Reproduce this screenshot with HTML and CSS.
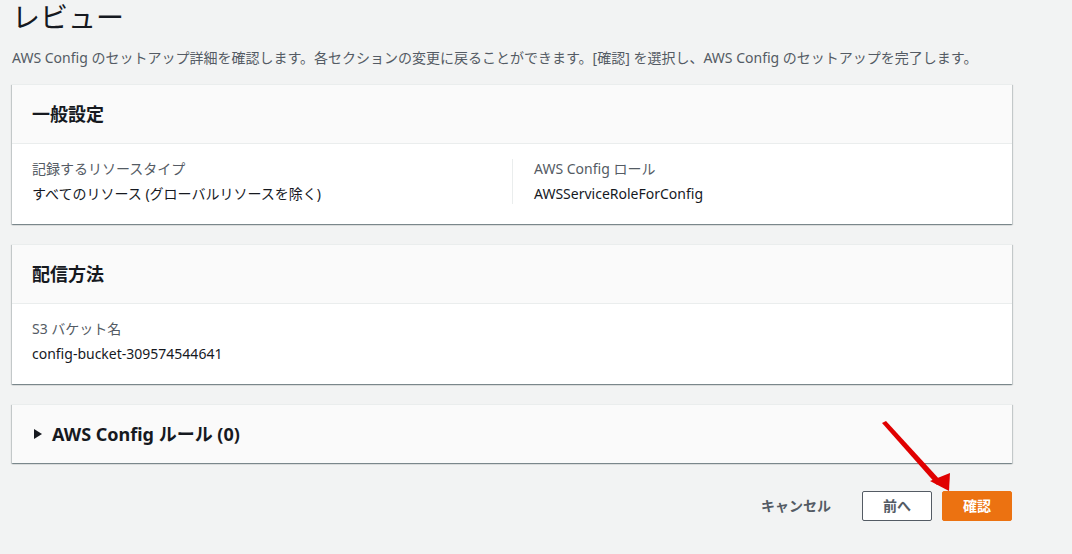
FILE: index.html
```html
<!DOCTYPE html>
<html lang="ja">
<head>
<meta charset="utf-8">
<title>レビュー</title>
<link rel="stylesheet" href="styles.css">
</head>
<body>
<div class="page">
  <h1 class="title">レビュー</h1>
  <p class="desc">AWS Config のセットアップ詳細を確認します。各セクションの変更に戻ることができます。[確認] を選択し、AWS Config のセットアップを完了します。</p>

  <section class="card">
    <div class="card-head"><h2>一般設定</h2></div>
    <div class="card-body cols">
      <div class="col">
        <div class="label">記録するリソースタイプ</div>
        <div class="value">すべてのリソース (グローバルリソースを除く)</div>
      </div>
      <div class="col col-2">
        <div class="label">AWS Config ロール</div>
        <div class="value">AWSServiceRoleForConfig</div>
      </div>
    </div>
  </section>

  <section class="card">
    <div class="card-head"><h2>配信方法</h2></div>
    <div class="card-body">
      <div class="col">
        <div class="label">S3 バケット名</div>
        <div class="value">config-bucket-309574544641</div>
      </div>
    </div>
  </section>

  <section class="card">
    <div class="card-head collapsed"><span class="caret"></span><h2>AWS Config ルール (0)</h2></div>
  </section>

  <div class="actions">
    <button class="btn btn-link">キャンセル</button>
    <button class="btn btn-normal">前へ</button>
    <button class="btn btn-primary">確認</button>
  </div>
</div>
<svg class="annot" width="1072" height="554" viewBox="0 0 1072 554">
  <path d="M882 423 L886 421 L941 481 L937 485 Z" fill="#e00000"/>
  <path d="M949 491 L930 481 L950 473 Z" fill="#e00000"/>
</svg>
</body>
</html>
```

FILE: styles.css
```css
html, body {
  margin: 0;
  padding: 0;
  background: #f2f3f3;
}
body {
  font-family: "Noto Sans", "Noto Sans CJK JP", sans-serif;
  color: #16191f;
  width: 1072px;
  height: 554px;
  overflow: hidden;
  position: relative;
}
.page {
  padding: 0 60px 0 12px;
  display: flex;
  flex-direction: column;
}
.title {
  margin: 0;
  font-size: 28px;
  font-weight: 400;
  line-height: 35px;
  color: #16191f;
}
.desc {
  margin: 13px 0 16px;
  font-size: 14px;
  line-height: 20px;
  color: #545b64;
  white-space: nowrap;
}
.card {
  background: #fff;
  border-top: 1px solid #eaeded;
  box-shadow: 0 1px 1px 0 rgba(0, 28, 36, 0.3), 1px 1px 1px 0 rgba(0, 28, 36, 0.15), -1px 1px 1px 0 rgba(0, 28, 36, 0.15);
  margin-bottom: 20px;
  width: 1000px;
}
.card-head {
  background: #fafafa;
  padding: 18px 20px;
  border-bottom: 1px solid #eaeded;
  display: flex;
  align-items: center;
}
.card-head.collapsed {
  border-bottom: none;
}
.card-head h2 {
  margin: 0;
  font-size: 18px;
  font-weight: 700;
  line-height: 22px;
}
.caret {
  width: 0;
  height: 0;
  border-top: 5px solid transparent;
  border-bottom: 5px solid transparent;
  border-left: 8px solid #16191f;
  margin: 0 10px 0 2px;
}
.card-body {
  padding: 15px 20px 20px;
}
.cols {
  display: grid;
  grid-template-columns: 1fr 1fr;
}
.col-2 {
  border-left: 1px solid #eaeded;
  padding-left: 21px;
}
.label {
  font-size: 14px;
  line-height: 20px;
  color: #545b64;
  margin-bottom: 5px;
}
.value {
  font-size: 14px;
  line-height: 20px;
  color: #16191f;
}
.actions {
  display: flex;
  justify-content: flex-end;
  gap: 10px;
  width: 1000px;
  margin-top: 8px;
}
.btn {
  font-family: inherit;
  font-size: 14px;
  font-weight: 700;
  line-height: 20px;
  padding: 4px 20px;
  border-radius: 2px;
  border: 1px solid transparent;
  cursor: pointer;
}
.btn-link {
  background: transparent;
  color: #545b64;
  font-weight: 600;
}
.btn-normal {
  background: #fff;
  border-color: #545b64;
  color: #545b64;
}
.btn-primary {
  background: #ec7211;
  border-color: #ec7211;
  color: #fff;
}
.annot {
  position: absolute;
  left: 0;
  top: 0;
  pointer-events: none;
}
```
